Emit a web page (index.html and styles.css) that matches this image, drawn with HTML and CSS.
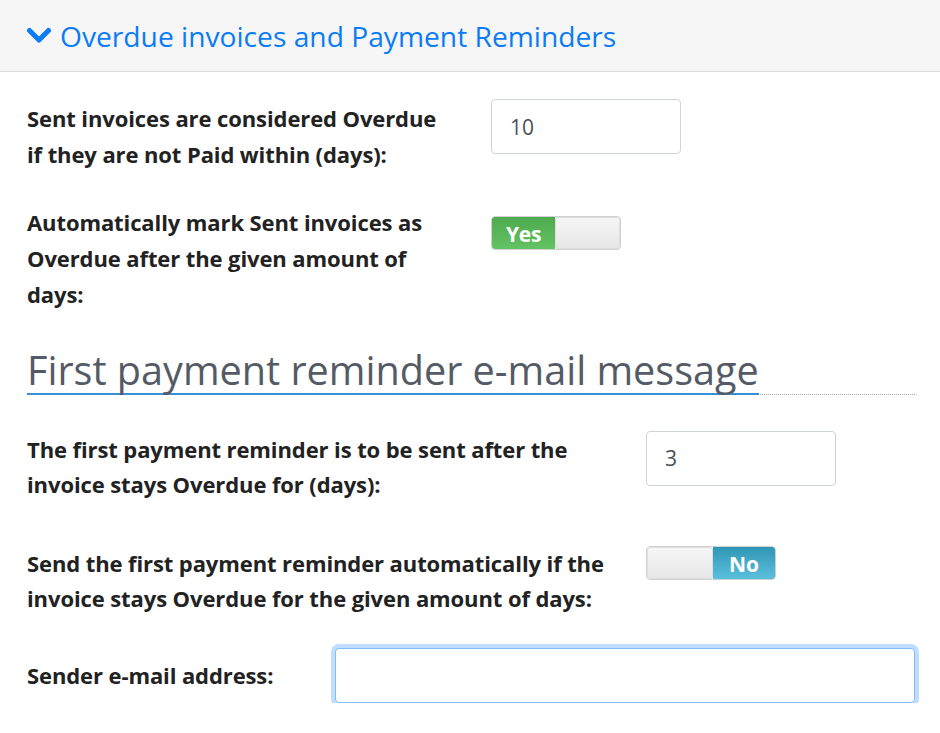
FILE: index.html
```html
<!DOCTYPE html>
<html>
<head>
<meta charset="utf-8">
<link rel="stylesheet" href="styles.css">
</head>
<body>
<div class="panel-head">
  <svg class="chev" width="26" height="18" viewBox="0 0 26 18"><polyline points="3.5,3.5 13,13 22.5,3.5" fill="none" stroke="#0b7cf5" stroke-width="5" stroke-linecap="round" stroke-linejoin="round"/></svg>
  <span class="panel-title">Overdue invoices and Payment Reminders</span>
</div>
<div class="content">
  <div class="row r1">
    <label class="lbl">Sent invoices are considered Overdue<br>if they are not Paid within (days):</label>
    <div class="ctl"><input class="inp num" type="text" value="10"></div>
  </div>
  <div class="row r2">
    <label class="lbl">Automatically mark Sent invoices as<br>Overdue after the given amount of<br>days:</label>
    <div class="ctl"><div class="toggle"><span class="on-yes">Yes</span><span class="handle"></span></div></div>
  </div>
  <div class="section-head"><h2>First payment reminder e-mail message</h2></div>
  <div class="row r3">
    <label class="lbl">The first payment reminder is to be sent after the<br>invoice stays Overdue for (days):</label>
    <div class="ctl"><input class="inp num" type="text" value="3"></div>
  </div>
  <div class="row r4">
    <label class="lbl">Send the first payment reminder automatically if the<br>invoice stays Overdue for the given amount of days:</label>
    <div class="ctl"><div class="toggle off"><span class="handle"></span><span class="off-no">No</span></div></div>
  </div>
  <div class="row r5">
    <label class="lbl">Sender e-mail address:</label>
    <div class="ctl"><input class="inp wide" type="text" value=""></div>
  </div>
</div>
</body>
</html>
```
FILE: styles.css
```css
html, body { margin: 0; padding: 0; background: #fff; }
body { font-family: "Open Sans", "Noto Sans", sans-serif; color: #222; width: 940px; overflow: hidden; }
.panel-head {
  height: 72px; box-sizing: border-box; background: #f6f6f6; border-bottom: 1px solid #dcdcdc;
  display: flex; align-items: center; padding-left: 26px; gap: 8px;
}
.chev { margin-top: 1px; }
.panel-title { font-size: 28.2px; color: #0b7cf5; letter-spacing: 0; }
.content { padding: 28px 25px 0 27px; }
.row { display: grid; align-items: start; }
.lbl { font-weight: 700; font-size: 22px; line-height: 36px; letter-spacing: -0.1px; display: block; white-space: nowrap; }
.r1 { grid-template-columns: 464px 190px; }
.r2 { grid-template-columns: 464px 130px; margin-top: 32px; }
.r3 { grid-template-columns: 619px 190px; }
.r4 { grid-template-columns: 619px 130px; margin-top: 44px; }
.r3 .lbl, .r4 .lbl { line-height: 35px; }
.r5 { grid-template-columns: 308px 580px; margin-top: 32px; align-items: center; }
.r1 .ctl { margin-top: -1px; }
.r3 .ctl { margin-top: -1px; }
.r2 .ctl { margin-top: 12px; }
.r4 .ctl { margin-top: 0; }
.inp {
  box-sizing: border-box; height: 55px; border: 1px solid #ced4da; border-radius: 4px;
  font-family: inherit; font-size: 21px; color: #495057; padding: 0 18px; background: #fff; outline: none; display: block;
}
.num { width: 190px; }
.wide { width: 580px; border-color: #80bdff; box-shadow: 0 0 0 4px rgba(0,123,255,0.25); }
.toggle {
  width: 130px; height: 34px; box-sizing: border-box; border: 1px solid #d0d0d0; border-radius: 4px;
  display: flex; overflow: hidden;
}
.on-yes {
  width: 63px; background: linear-gradient(#4fa94f, #62c462); color: #fff; font-weight: 700; font-size: 21px;
  display: flex; align-items: center; justify-content: center; letter-spacing: -0.3px; padding-top: 2px;
}
.handle { flex: 1; background: linear-gradient(#f6f6f6, #e6e6e6); border-radius: 3px; box-shadow: inset 0 0 0 1px #dedede; }
.off-no {
  width: 62px; background: linear-gradient(#2f96b4, #5bc0de); color: #fff; font-weight: 700; font-size: 21px;
  display: flex; align-items: center; justify-content: center; padding-top: 2px;
}
.section-head { margin-top: 36px; margin-bottom: 37px; border-bottom: 1px dotted #aaa; width: 888px; }
.section-head h2 {
  margin: 0; display: inline-block; font-weight: 400; font-size: 39.6px; color: #545b66; line-height: 45px;
  border-bottom: 2px solid #3a8fd8; margin-bottom: -1.5px; letter-spacing: 0;
}
```
